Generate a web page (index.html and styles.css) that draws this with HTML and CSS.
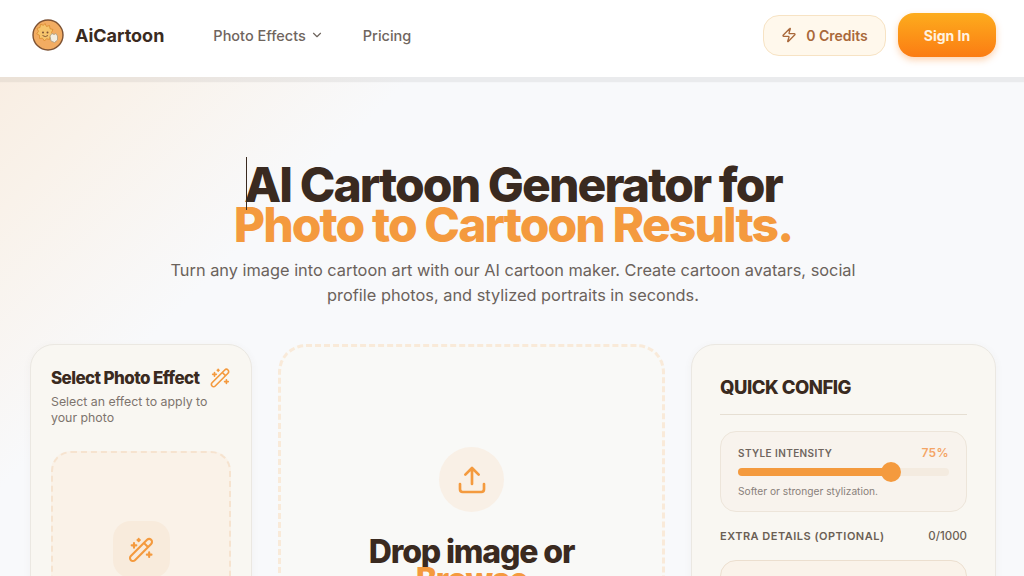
FILE: index.html
```html
<!DOCTYPE html>
<html lang="en">
<head>
    <meta charset="UTF-8">
    <meta name="viewport" content="width=device-width, initial-scale=1.0">
    <title>AiCartoon</title>
    <link rel="stylesheet" href="styles.css">
</head>
<body>
    <header class="topbar">
        <a class="brand" href="#">
            <svg class="brand-logo" viewBox="0 0 32 32" aria-hidden="true">
                <circle cx="16" cy="16" r="15" fill="#f2ac62" stroke="#7d5233" stroke-width="1.4"/>
                <path d="M13 4.500l1.500 3 3-1 .5 3.200 3 .8-1.500 3 1.500 3-3 1-.5 3-3-.8-2 2.300-2-2.800-3 .3v-3.200l-2.800-1.500 1.800-2.500-1.500-3 3-.8.500-3.200 3 1z" fill="#f6c56c" stroke="#d98a2e" stroke-width=".8"/>
                <circle cx="11" cy="13.500" r="1" fill="#7d5233"/>
                <circle cx="15.500" cy="13.500" r="1" fill="#7d5233"/>
                <path d="M10.500 16.500q2.800 2.200 5.500 0" fill="none" stroke="#7d5233" stroke-width=".9"/>
                <path d="M18 17l2-2.500 2 1 2-1 1.500 2.500v4l-3 2.500-3.500-1.500z" fill="#f3eee2" stroke="#a99a80" stroke-width=".8"/>
            </svg>
            <span class="brand-name">AiCartoon</span>
        </a>
        <nav class="topnav">
            <a href="#">Photo Effects
                <svg class="chevron" viewBox="0 0 24 24" aria-hidden="true"><path d="m6 9 6 6 6-6"/></svg>
            </a>
            <a href="#">Pricing</a>
        </nav>
        <div class="actions">
            <button class="credits">
                <svg viewBox="0 0 24 24" aria-hidden="true"><path d="M4 14a1 1 0 0 1-.78-1.630l9.900-10.200a.500.500 0 0 1 .860.460l-1.920 6.020A1 1 0 0 0 13 10h7a1 1 0 0 1 .780 1.630l-9.900 10.200a.500.500 0 0 1-.860-.460l1.920-6.020A1 1 0 0 0 11 14z"/></svg>
                0 Credits
            </button>
            <button class="signin">Sign In</button>
        </div>
    </header>

    <main class="page">
        <section class="hero">
            <h1 class="hero-title"><span class="caret-line"><span class="caret"></span>AI Cartoon Generator for</span><span class="accent">Photo to Cartoon Results.</span></h1>
            <p class="hero-text">Turn any image into cartoon art with our AI cartoon maker. Create cartoon avatars, social profile photos, and stylized portraits in seconds.</p>
        </section>

        <section class="tool">
            <div class="card effects">
                <div class="effects-head">
                    <h2>Select Photo Effect</h2>
                    <svg class="wand" viewBox="0 0 24 24" aria-hidden="true"><use href="#wand"/></svg>
                </div>
                <p class="effects-note">Select an effect to apply to your photo</p>
                <div class="effect-drop">
                    <div class="effect-icon">
                        <svg class="wand" viewBox="0 0 24 24" aria-hidden="true"><use href="#wand"/></svg>
                    </div>
                </div>
            </div>

            <div class="upload">
                <div class="upload-icon">
                    <svg viewBox="0 0 24 24" aria-hidden="true"><path d="M12 3v12M7 8l5-5 5 5M3 15v4a2 2 0 0 0 2 2h14a2 2 0 0 0 2-2v-4"/></svg>
                </div>
                <h2 class="upload-title">Drop image or <span class="accent">Browse</span></h2>
            </div>

            <div class="card config">
                <h2 class="config-title">QUICK CONFIG</h2>
                <div class="intensity">
                    <div class="intensity-head">
                        <span>STYLE INTENSITY</span>
                        <span class="intensity-value">75%</span>
                    </div>
                    <div class="slider">
                        <div class="slider-fill" style="width: 72%"></div>
                        <div class="slider-knob"></div>
                    </div>
                    <p>Softer or stronger stylization.</p>
                </div>
                <div class="details-head">
                    <span>EXTRA DETAILS (OPTIONAL)</span>
                    <span class="details-count">0/1000</span>
                </div>
                <div class="details-box"></div>
            </div>
        </section>
    </main>

    <svg class="defs" aria-hidden="true">
        <symbol id="wand" viewBox="0 0 24 24">
            <path d="M3.300 17.200 17.200 3.300a2.300 2.300 0 0 1 3.500 3.500L6.800 20.700a2.300 2.300 0 0 1-3.500-3.500zM14.500 6l3.500 3.500"/>
            <path d="M6 6v4M4 8h4M10 2.500v2M9 3.500h2M19 14v4M17 16h4"/>
        </symbol>
    </svg>
</body>
</html>
```

FILE: styles.css
```css
html, body {
    height: 576px;
    overflow: hidden;
}
body {
    margin: 0;
    font-family: Inter, "Liberation Sans", sans-serif;
    color: #3a2a20;
    background-color: #f8f9fb;
}
h1, h2, p {
    margin: 0;
}
a {
    color: inherit;
    text-decoration: none;
}
button {
    font-family: inherit;
    border: none;
}
.defs {
    display: none;
}

/* top bar */
.topbar {
    display: flex;
    align-items: center;
    height: 77px;
    padding: 0 28px 7px 32px;
    background-color: #ffffff;
    box-shadow: 0 5px 1px rgba(60, 60, 60, 0.07);
    position: relative;
    box-sizing: border-box;
}
.brand {
    display: flex;
    align-items: center;
    gap: 11px;
}
.brand-logo {
    width: 32px;
    height: 32px;
}
.brand-name {
    font-size: 18px;
    font-weight: 700;
    letter-spacing: -0.02px;
}
.topnav {
    display: flex;
    gap: 39px;
    margin-left: 49px;
    font-size: 14.500px;
    font-weight: 500;
    color: #6f655e;
}
.topnav a {
    display: flex;
    align-items: center;
    gap: 4px;
}
.chevron {
    width: 14px;
    height: 14px;
    fill: none;
    stroke: #6f655e;
    stroke-width: 2;
    stroke-linecap: round;
    stroke-linejoin: round;
}
.actions {
    display: flex;
    align-items: center;
    gap: 12px;
    margin-left: auto;
}
.credits {
    display: flex;
    align-items: center;
    gap: 9px;
    width: 123px;
    height: 41px;
    justify-content: center;
    box-sizing: border-box;
    border: 1px solid #f7e3c4;
    border-radius: 16px;
    background-color: #fff8ec;
    color: #a9683a;
    font-size: 14px;
    font-weight: 600;
}
.credits svg {
    width: 16px;
    height: 16px;
    fill: none;
    stroke: #a9683a;
    stroke-width: 2;
    stroke-linejoin: round;
}
.signin {
    width: 98px;
    height: 44px;
    border-radius: 16px;
    background: linear-gradient(180deg, #fdac1d, #fb7c13);
    box-shadow: 0 3px 7px rgba(250, 130, 30, 0.35);
    color: #fff2e0;
    font-size: 14px;
    font-weight: 700;
}

/* hero */
.page {
    height: 499px;
    padding: 0 28px 0 30px;
    box-sizing: border-box;
    background: linear-gradient(135deg, #f9eee3 0, #f9f2ea 9%, #f8f9fb 27%);
}
.hero {
    display: flex;
    flex-direction: column;
    align-items: center;
    padding-top: 88px;
    text-align: center;
}
.hero-title {
    font-size: 48px;
    line-height: 40px;
    font-weight: 800;
    letter-spacing: -1.900px;
}
.hero-title > span {
    display: block;
}
.caret-line {
    position: relative;
}
.caret {
    position: absolute;
    left: 12px;
    top: -8px;
    width: 1px;
    height: 53px;
    background-color: #3a2a20;
}
.accent {
    color: #f49a3e;
}
.hero-text {
    width: 700px;
    margin-top: 13px;
    font-size: 16.350px;
    line-height: 25px;
    color: #6b625b;
}

/* tool columns */
.tool {
    display: grid;
    grid-template-columns: 222px 387px 305px;
    gap: 26px;
    margin-top: 36px;
    align-items: start;
}
.card {
    height: 420px;
    box-sizing: border-box;
    border: 1px solid #ebe8e2;
    border-radius: 24px;
    background-color: #f9f7f2;
    box-shadow: 0 2px 8px rgba(90, 70, 50, 0.05);
}
.wand {
    width: 22px;
    height: 22px;
    fill: none;
    stroke: #f49a3e;
    stroke-width: 1.800;
    stroke-linecap: round;
    stroke-linejoin: round;
}
.effects {
    padding: 22px 20px;
}
.effects-head {
    display: flex;
    align-items: center;
    justify-content: space-between;
}
.effects-head h2 {
    font-size: 17px;
    font-weight: 800;
    letter-spacing: -0.6px;
    white-space: nowrap;
}
.effects-note {
    margin-top: 5px;
    font-size: 12.350px;
    line-height: 16px;
    color: #7d746d;
}
.effect-drop {
    display: flex;
    justify-content: center;
    height: 300px;
    margin-top: 25px;
    padding-top: 68px;
    box-sizing: border-box;
    border: 2px dashed #f6e3cf;
    border-radius: 20px;
    background-color: #faf2e8;
}
.effect-icon {
    display: flex;
    align-items: center;
    justify-content: center;
    width: 57px;
    height: 57px;
    border-radius: 18px;
    background-color: #f8ebdc;
}
.effect-icon .wand {
    width: 28px;
    height: 28px;
}

/* upload */
.upload {
    display: flex;
    flex-direction: column;
    align-items: center;
    height: 420px;
    padding-top: 100px;
    box-sizing: border-box;
    border: 3px dashed #f9ead9;
    border-radius: 28px;
    background-color: #f9f9f7;
}
.upload-icon {
    display: flex;
    align-items: center;
    justify-content: center;
    width: 65px;
    height: 65px;
    border-radius: 50%;
    background-color: #f9f0e6;
}
.upload-icon svg {
    width: 32px;
    height: 32px;
    fill: none;
    stroke: #f49a3e;
    stroke-width: 2;
    stroke-linecap: round;
    stroke-linejoin: round;
}
.upload-title {
    width: 240px;
    margin-top: 26px;
    font-size: 32px;
    line-height: 28px;
    font-weight: 800;
    letter-spacing: -1.150px;
    text-align: center;
}

/* quick config */
.config {
    padding: 28px;
}
.config-title {
    padding-bottom: 13px;
    border-bottom: 1px solid #e6dfd3;
    font-size: 18.500px;
    line-height: 28px;
    font-weight: 800;
    letter-spacing: -0.5px;
}
.intensity {
    margin-top: 16px;
    padding: 13px 17px 0;
    height: 81px;
    box-sizing: border-box;
    border: 1px solid #ede5da;
    border-radius: 16px;
    background-color: #f8f3ed;
}
.intensity-head {
    display: flex;
    justify-content: space-between;
    align-items: center;
    font-size: 10px;
    font-weight: 600;
    letter-spacing: 0.4px;
    color: #6f655e;
}
.intensity-value {
    font-size: 12px;
    color: #f4a465;
}
.slider {
    position: relative;
    height: 8px;
    margin-top: 8px;
    border-radius: 4px;
    background-color: #f4ebe0;
}
.slider-fill {
    height: 100%;
    border-radius: 4px;
    background-color: #f49a3e;
}
.slider-knob {
    position: absolute;
    left: 143px;
    top: -6px;
    width: 20px;
    height: 20px;
    border-radius: 50%;
    background-color: #f49a3e;
}
.intensity p {
    margin-top: 8px;
    font-size: 10.200px;
    line-height: 14px;
    color: #88807a;
}
.details-head {
    display: flex;
    justify-content: space-between;
    align-items: center;
    margin-top: 17px;
    font-size: 11px;
    line-height: 14px;
    font-weight: 600;
    letter-spacing: 0.5px;
    color: #6b5f55;
}
.details-count {
    letter-spacing: 0;
    font-size: 11.500px;
    font-weight: 500;
}
.details-box {
    height: 120px;
    margin-top: 17px;
    box-sizing: border-box;
    border: 1px solid #ecdfcf;
    border-radius: 16px;
    background-color: #faf3ea;
}
```
